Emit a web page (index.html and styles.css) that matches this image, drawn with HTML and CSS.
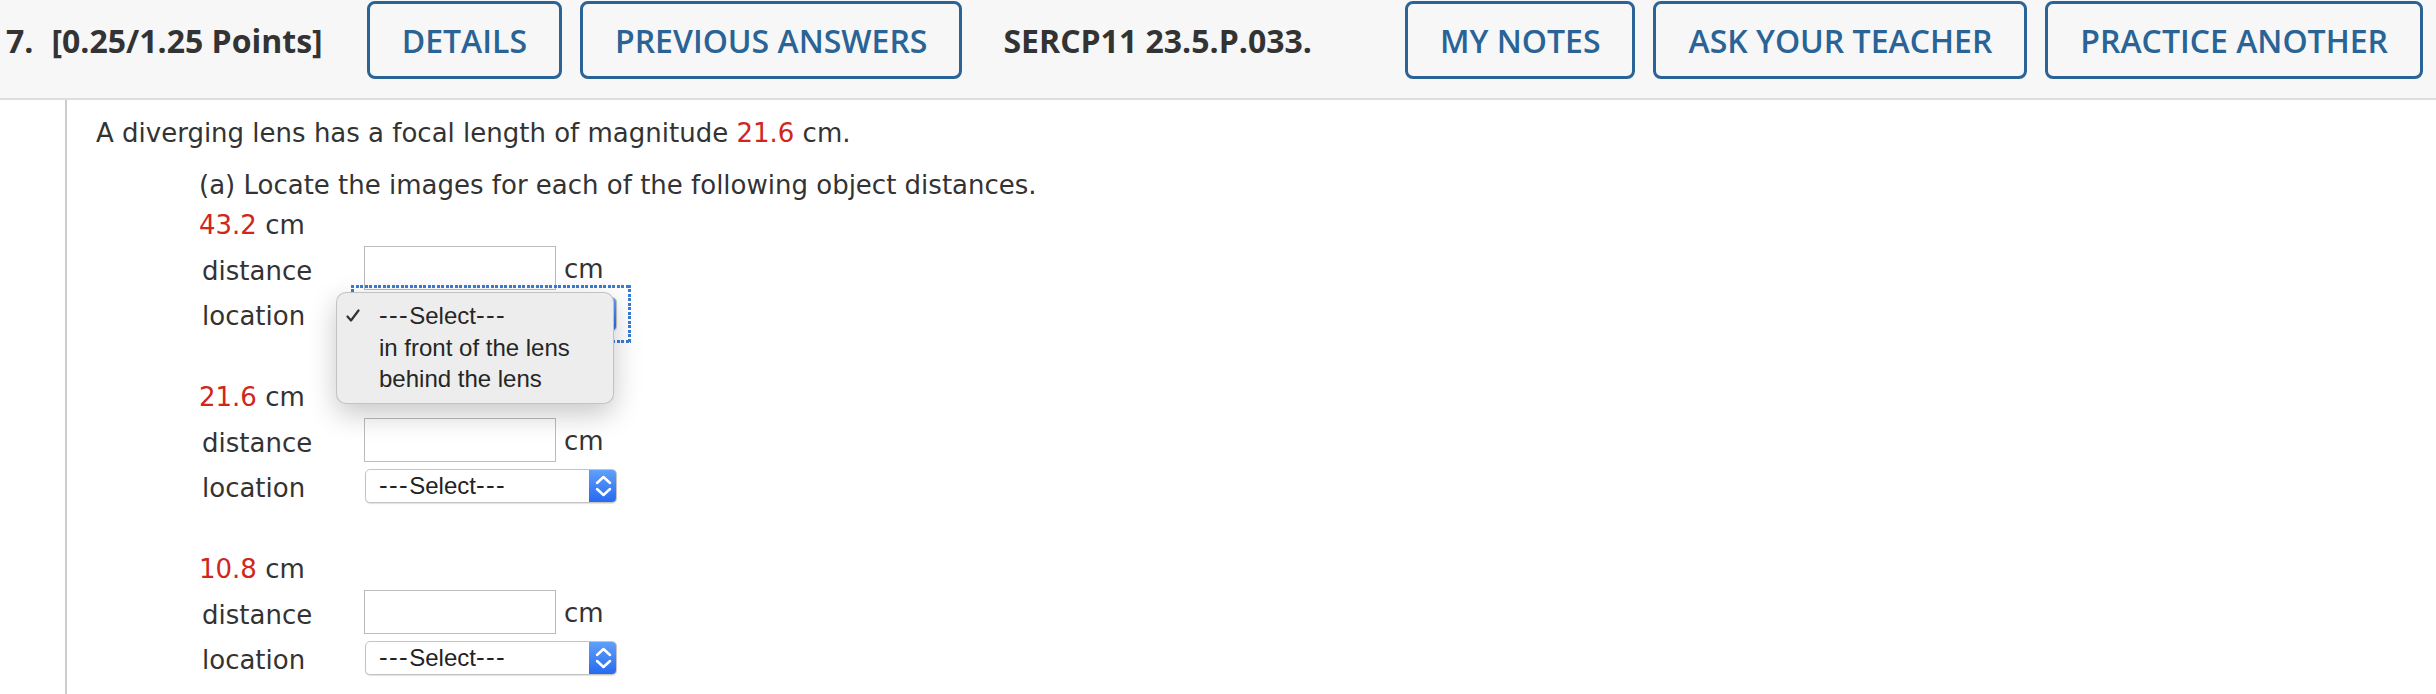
FILE: index.html
```html
<!DOCTYPE html>
<html>
<head>
<meta charset="utf-8">
<title>Question 7</title>
<link rel="stylesheet" href="styles.css">
</head>
<body>
<div class="qhead">
  <div class="qtitle"><span class="qnum">7.</span><span class="qpts">[0.25/1.25 Points]</span></div>
  <button class="btn btn-first">DETAILS</button>
  <button class="btn">PREVIOUS ANSWERS</button>
  <span class="qcode">SERCP11 23.5.P.033.</span>
  <div class="qtools">
    <button class="btn">MY NOTES</button>
    <button class="btn">ASK YOUR TEACHER</button>
    <button class="btn">PRACTICE ANOTHER</button>
  </div>
</div>
<div class="qbody">
  <p class="stem">A diverging lens has a focal length of magnitude <span class="red">21.6</span> cm.</p>
  <div class="part">
    <p class="prompt">(a) Locate the images for each of the following object distances.</p>

    <div class="case">
      <div class="case-label"><span class="red">43.2</span> cm</div>
      <div class="row row-dist"><span class="lbl">distance</span><input class="field" type="text"><span class="unit">cm</span></div>
      <div class="row row-loc"><span class="lbl">location</span>
        <div class="sel-wrap focused">
          <div class="sel"><span class="sel-text"><span class="dash">---</span>Select<span class="dash">---</span></span><span class="sel-arrow"><svg width="28" height="34" viewBox="0 0 28 34"><path d="M8 14 L14.5 8 L21 14 M8 20 L14.5 26 L21 20" fill="none" stroke="#fff" stroke-width="2.5" stroke-linecap="round" stroke-linejoin="round"/></svg></span></div>
          <ul class="menu">
            <li class="menu-item checked"><svg class="check" width="14" height="14" viewBox="0 0 14 14"><path d="M1.5 7.5 L5 11.5 L12.5 1.5" fill="none" stroke="#333" stroke-width="2.2" stroke-linecap="round" stroke-linejoin="round"/></svg><span class="dash">---</span>Select<span class="dash">---</span></li>
            <li class="menu-item">in front of the lens</li>
            <li class="menu-item">behind the lens</li>
          </ul>
        </div>
      </div>
    </div>

    <div class="case">
      <div class="case-label"><span class="red">21.6</span> cm</div>
      <div class="row row-dist"><span class="lbl">distance</span><input class="field" type="text"><span class="unit">cm</span></div>
      <div class="row row-loc"><span class="lbl">location</span>
        <div class="sel-wrap">
          <div class="sel"><span class="sel-text"><span class="dash">---</span>Select<span class="dash">---</span></span><span class="sel-arrow"><svg width="28" height="34" viewBox="0 0 28 34"><path d="M8 14 L14.5 8 L21 14 M8 20 L14.5 26 L21 20" fill="none" stroke="#fff" stroke-width="2.5" stroke-linecap="round" stroke-linejoin="round"/></svg></span></div>
        </div>
      </div>
    </div>

    <div class="case">
      <div class="case-label"><span class="red">10.8</span> cm</div>
      <div class="row row-dist"><span class="lbl">distance</span><input class="field" type="text"><span class="unit">cm</span></div>
      <div class="row row-loc"><span class="lbl">location</span>
        <div class="sel-wrap">
          <div class="sel"><span class="sel-text"><span class="dash">---</span>Select<span class="dash">---</span></span><span class="sel-arrow"><svg width="28" height="34" viewBox="0 0 28 34"><path d="M8 14 L14.5 8 L21 14 M8 20 L14.5 26 L21 20" fill="none" stroke="#fff" stroke-width="2.5" stroke-linecap="round" stroke-linejoin="round"/></svg></span></div>
        </div>
      </div>
    </div>
  </div>
</div>
</body>
</html>
```

FILE: styles.css
```css
* { box-sizing: border-box; }
html, body { margin: 0; padding: 0; background: #fff; }
body { width: 2436px; height: 694px; overflow: hidden; }

.qhead {
  display: flex;
  align-items: flex-start;
  height: 100px;
  padding: 1px 13px 0 0;
  background: #f7f7f7;
  border-bottom: 2px solid #dddddd;
  font-family: "Open Sans", sans-serif;
  font-size: 32px;
}
.qtitle {
  display: flex;
  align-items: center;
  height: 78px;
  padding-left: 6px;
  color: #333;
  font-weight: 700;
  white-space: nowrap;
}
.qnum { margin-right: 18px; }
.btn {
  height: 78px;
  margin: 0 0 0 18px;
  padding: 0 32px;
  border: 3px solid #2a6395;
  border-radius: 8px;
  background: transparent;
  color: #2a6395;
  font-family: "Open Sans", sans-serif;
  font-size: 32px;
  font-weight: 600;
  white-space: nowrap;
}
.btn-first { margin-left: 44px; }
.qcode {
  display: flex;
  align-items: center;
  height: 78px;
  margin-left: 41px;
  color: #333;
  font-weight: 700;
  white-space: nowrap;
}
.qtools { display: flex; margin-left: auto; }
.qtools .btn:first-child { margin-left: 0; }

.qbody {
  margin-left: 65px;
  height: 594px;
  padding: 13px 0 0 29px;
  border-left: 2px solid #cccccc;
  font-family: "DejaVu Sans", Verdana, sans-serif;
  font-size: 26px;
  color: #333;
}
.stem, .prompt { margin: 0; line-height: 40px; white-space: nowrap; }
.part { padding-left: 103px; }
.prompt { margin-top: 12px; }
.red { color: #d0261c; }

.case { margin-bottom: 41px; }
.case-label { line-height: 40px; height: 40px; }
.row { display: flex; align-items: flex-start; }
.row-dist { height: 51px; }
.row-loc { height: 40px; }
.lbl { width: 165px; padding-left: 3px; line-height: 40px; }
.row-dist .lbl { line-height: 44px; padding-top: 4px; }
.field {
  width: 192px;
  height: 44px;
  margin: 1px 0 0 0;
  border: 1px solid #bcbcbc;
  border-radius: 0;
  background: #fff;
  padding: 0 6px;
  font: 26px "DejaVu Sans", sans-serif;
}
.unit { margin-left: 8px; line-height: 44px; padding-top: 2px; }

.sel-wrap { position: relative; margin: 1px 0 0 1px; }
.sel {
  display: flex;
  align-items: center;
  width: 252px;
  height: 34px;
  border: 1px solid #c4c4c4;
  border-radius: 5px;
  background: #fff;
  box-shadow: 0 1px 1px rgba(0,0,0,0.12);
  overflow: hidden;
  font-family: "Liberation Sans", Arial, sans-serif;
  font-size: 24px;
  color: #222;
}
.sel-text { padding-left: 13px; flex: 1; line-height: 32px; white-space: nowrap; }
.dash { font-family: "DejaVu Sans", sans-serif; letter-spacing: 1.4px; }
.sel-arrow {
  display: block;
  width: 28px;
  height: 34px;
  margin: -1px -1px -1px 0;
  background: linear-gradient(#62a1fa, #2469f0);
  border-radius: 0 5px 5px 0;
}
.sel-arrow svg { display: block; }

.focused::after {
  content: "";
  position: absolute;
  top: -12px;
  bottom: -12px;
  left: -14px;
  right: -14px;
  z-index: 1;
  background:
    repeating-linear-gradient(90deg, #3a7bd5 0 3px, transparent 3px 4.5px) left top / 100% 3px no-repeat,
    repeating-linear-gradient(90deg, #3a7bd5 0 3px, transparent 3px 4.5px) left bottom / 100% 3px no-repeat,
    repeating-linear-gradient(180deg, #3a7bd5 0 3px, transparent 3px 4.5px) left top / 3px 100% no-repeat,
    repeating-linear-gradient(180deg, #3a7bd5 0 3px, transparent 3px 4.5px) right top / 3px 100% no-repeat;
}

.menu {
  position: absolute;
  z-index: 2;
  left: -29px;
  top: -5px;
  width: 278px;
  margin: 0;
  padding: 7px 0 8px 0;
  list-style: none;
  background: #ededed;
  border: 1px solid rgba(0,0,0,0.18);
  border-radius: 10px;
  box-shadow: 0 10px 28px rgba(0,0,0,0.22);
  font-family: "Liberation Sans", Arial, sans-serif;
  font-size: 24px;
  color: #262626;
}
.menu-item {
  position: relative;
  padding-left: 42px;
  line-height: 31.5px;
  height: 31.5px;
  white-space: nowrap;
}
.check { position: absolute; left: 9px; top: 9px; }
```
